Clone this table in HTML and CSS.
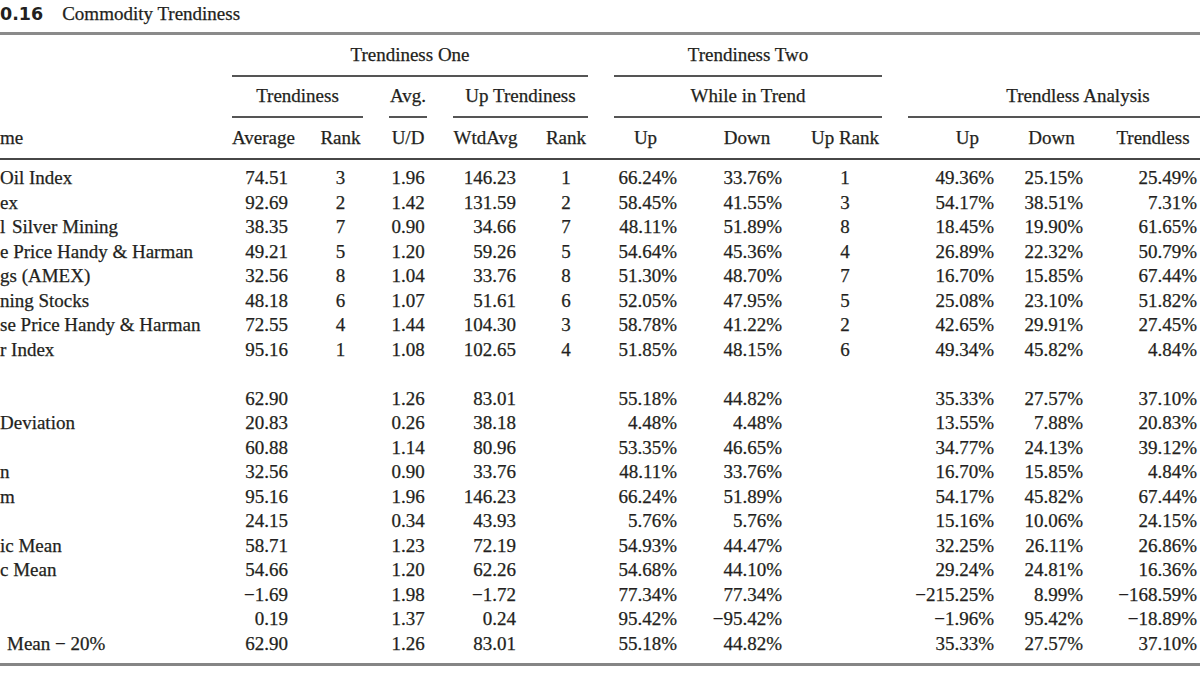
FILE: index.html
```html
<!DOCTYPE html>
<html>
<head>
<meta charset="utf-8">
<title>Commodity Trendiness</title>
<link rel="stylesheet" href="styles.css">
</head>
<body>
<div class="title"><span class="num">0.16</span><span class="cap">Commodity Trendiness</span></div>
<div class="rule-top"></div>

<div class="row hrow1">
  <div class="grp span-t1">Trendiness One</div>
  <div class="grp span-t2">Trendiness Two</div>
</div>
<div class="row hrow2">
  <div class="grp span-a">Trendiness</div>
  <div class="grp span-b">Avg.</div>
  <div class="grp span-c">Up Trendiness</div>
  <div class="grp span-d">While in Trend</div>
  <div class="grp span-e">Trendless Analysis</div>
</div>
<div class="row hrow3">
  <div>me</div>
  <div>Average</div>
  <div>Rank</div>
  <div>U/D</div>
  <div>WtdAvg</div>
  <div>Rank</div>
  <div>Up</div>
  <div>Down</div>
  <div>Up Rank</div>
  <div>Up</div>
  <div>Down</div>
  <div>Trendless</div>
</div>

<div class="tbody">
<div class="row data"><div>Oil Index</div><div>74.51</div><div>3</div><div>1.96</div><div>146.23</div><div>1</div><div>66.24%</div><div>33.76%</div><div>1</div><div>49.36%</div><div>25.15%</div><div>25.49%</div></div>
<div class="row data"><div>ex</div><div>92.69</div><div>2</div><div>1.42</div><div>131.59</div><div>2</div><div>58.45%</div><div>41.55%</div><div>3</div><div>54.17%</div><div>38.51%</div><div>7.31%</div></div>
<div class="row data"><div><span class="stem">l</span>Silver Mining</div><div>38.35</div><div>7</div><div>0.90</div><div>34.66</div><div>7</div><div>48.11%</div><div>51.89%</div><div>8</div><div>18.45%</div><div>19.90%</div><div>61.65%</div></div>
<div class="row data"><div>e Price Handy &amp; Harman</div><div>49.21</div><div>5</div><div>1.20</div><div>59.26</div><div>5</div><div>54.64%</div><div>45.36%</div><div>4</div><div>26.89%</div><div>22.32%</div><div>50.79%</div></div>
<div class="row data"><div>gs (AMEX)</div><div>32.56</div><div>8</div><div>1.04</div><div>33.76</div><div>8</div><div>51.30%</div><div>48.70%</div><div>7</div><div>16.70%</div><div>15.85%</div><div>67.44%</div></div>
<div class="row data"><div>ning Stocks</div><div>48.18</div><div>6</div><div>1.07</div><div>51.61</div><div>6</div><div>52.05%</div><div>47.95%</div><div>5</div><div>25.08%</div><div>23.10%</div><div>51.82%</div></div>
<div class="row data"><div>se Price Handy &amp; Harman</div><div>72.55</div><div>4</div><div>1.44</div><div>104.30</div><div>3</div><div>58.78%</div><div>41.22%</div><div>2</div><div>42.65%</div><div>29.91%</div><div>27.45%</div></div>
<div class="row data"><div>r Index</div><div>95.16</div><div>1</div><div>1.08</div><div>102.65</div><div>4</div><div>51.85%</div><div>48.15%</div><div>6</div><div>49.34%</div><div>45.82%</div><div>4.84%</div></div>
<div class="row data"><div></div></div>
<div class="row data"><div></div><div>62.90</div><div></div><div>1.26</div><div>83.01</div><div></div><div>55.18%</div><div>44.82%</div><div></div><div>35.33%</div><div>27.57%</div><div>37.10%</div></div>
<div class="row data"><div>Deviation</div><div>20.83</div><div></div><div>0.26</div><div>38.18</div><div></div><div>4.48%</div><div>4.48%</div><div></div><div>13.55%</div><div>7.88%</div><div>20.83%</div></div>
<div class="row data"><div></div><div>60.88</div><div></div><div>1.14</div><div>80.96</div><div></div><div>53.35%</div><div>46.65%</div><div></div><div>34.77%</div><div>24.13%</div><div>39.12%</div></div>
<div class="row data"><div>n</div><div>32.56</div><div></div><div>0.90</div><div>33.76</div><div></div><div>48.11%</div><div>33.76%</div><div></div><div>16.70%</div><div>15.85%</div><div>4.84%</div></div>
<div class="row data"><div>m</div><div>95.16</div><div></div><div>1.96</div><div>146.23</div><div></div><div>66.24%</div><div>51.89%</div><div></div><div>54.17%</div><div>45.82%</div><div>67.44%</div></div>
<div class="row data"><div></div><div>24.15</div><div></div><div>0.34</div><div>43.93</div><div></div><div>5.76%</div><div>5.76%</div><div></div><div>15.16%</div><div>10.06%</div><div>24.15%</div></div>
<div class="row data"><div>ic Mean</div><div>58.71</div><div></div><div>1.23</div><div>72.19</div><div></div><div>54.93%</div><div>44.47%</div><div></div><div>32.25%</div><div>26.11%</div><div>26.86%</div></div>
<div class="row data"><div>c Mean</div><div>54.66</div><div></div><div>1.20</div><div>62.26</div><div></div><div>54.68%</div><div>44.10%</div><div></div><div>29.24%</div><div>24.81%</div><div>16.36%</div></div>
<div class="row data"><div></div><div>−1.69</div><div></div><div>1.98</div><div>−1.72</div><div></div><div>77.34%</div><div>77.34%</div><div></div><div>−215.25%</div><div>8.99%</div><div>−168.59%</div></div>
<div class="row data"><div></div><div>0.19</div><div></div><div>1.37</div><div>0.24</div><div></div><div>95.42%</div><div>−95.42%</div><div></div><div>−1.96%</div><div>95.42%</div><div>−18.89%</div></div>
<div class="row data"><div><span class="ind7">Mean − 20%</span></div><div>62.90</div><div></div><div>1.26</div><div>83.01</div><div></div><div>55.18%</div><div>44.82%</div><div></div><div>35.33%</div><div>27.57%</div><div>37.10%</div></div>
</div>
<div class="rule-bottom"></div>
</body>
</html>
```
FILE: styles.css
```css
html, body {
  margin: 0;
  padding: 0;
}
body {
  width: 1200px;
  height: 675px;
  overflow: hidden;
  background: #ffffff;
  font-family: "Liberation Serif", "Times New Roman", serif;
  font-size: 19px;
  color: #231f20;
  -webkit-text-stroke: 0.25px #231f20;
}

.title {
  height: 30px;
  padding-top: 2px;
  line-height: 24.5px;
  white-space: nowrap;
}
.title .num {
  font-family: "DejaVu Sans", "Liberation Sans", sans-serif;
  font-weight: bold;
  font-size: 17.5px;
  -webkit-text-stroke: 0;
}
.title .cap {
  margin-left: 19px;
}

.rule-top {
  height: 3px;
  background: #8a8a8a;
}
.rule-bottom {
  margin-top: 7px;
  height: 3px;
  background: #858585;
}

.row {
  display: grid;
  grid-template-columns: 206px 60px 45px 38px 65px 44px 63px 79px 74px 86px 63px 91px;
  column-gap: 26px;
  line-height: 24.5px;
  white-space: nowrap;
}

.grp {
  text-align: center;
  border-bottom: 2px solid #555555;
}
.hrow1 {
  margin-top: 8.3px;
}
.hrow1 .grp {
  padding-bottom: 7px;
}
.hrow2 {
  margin-top: 7.2px;
}
.hrow2 .grp {
  padding-bottom: 8px;
}
.span-t1 { grid-column: 2 / 7; }
.span-t2 { grid-column: 7 / 10; }
.span-a { grid-column: 2 / 4; }
.span-b { grid-column: 4 / 5; }
.span-c { grid-column: 5 / 7; }
.span-d { grid-column: 7 / 10; }
.span-e { grid-column: 10 / 13; padding-left: 48px; }

.hrow3 {
  margin-top: 7.8px;
  padding-bottom: 7.2px;
  border-bottom: 2px solid #474747;
}
.hrow3 > div { text-align: center; }
.hrow3 > div:nth-child(1) { text-align: left; }
.hrow3 > div:nth-child(8) { padding-left: 9px; }
.hrow3 > div:nth-child(10) { text-align: right; padding-right: 15px; }
.hrow3 > div:nth-child(12) { padding-right: 3px; }

.tbody {
  margin-top: 6.3px;
}
.data {
  height: 24.5px;
}
.data > div { text-align: right; }
.data > div:nth-child(1) { text-align: left; }
.data > div:nth-child(2) { padding-right: 4px; }
.data > div:nth-child(3),
.data > div:nth-child(4),
.data > div:nth-child(6),
.data > div:nth-child(9) { text-align: center; }
.data > div:nth-child(5) { padding-right: 2px; }
.data > div:nth-child(12) { padding-right: 3px; }

.stem {
  display: inline-block;
  width: 12px;
}
.ind7 { padding-left: 7px; }
```
